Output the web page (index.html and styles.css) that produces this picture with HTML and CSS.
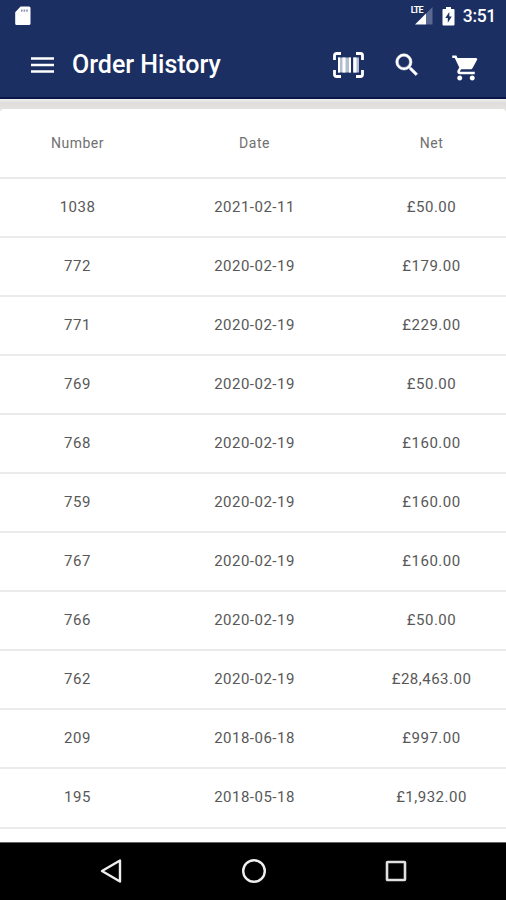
FILE: index.html
```
<!DOCTYPE html>
<html lang="en">
<head>
<meta charset="utf-8">
<title>Order History</title>
<link rel="stylesheet" href="styles.css">
</head>
<body>
<div class="screen">
  <header class="top">
    <div class="status">
      <svg class="sd" width="16" height="20" viewBox="0 0 16 20"><path fill="#fff" fill-rule="evenodd" d="M5.6 0.5H14a1.5 1.5 0 0 1 1.5 1.5v15.500a1.500 1.500 0 0 1-1.500 1.500H1.700a1.500 1.500 0 0 1-1.500-1.500V6.200Z"/><path fill="#8b96b5" d="M6 3.500h1.600v2.200H6Zm2.600 0h1.600v2.200H8.600Zm2.600 0h1.600v2.200h-1.600Z"/></svg>
      <div class="signal">
        <span class="lte">LTE</span>
        <svg width="19" height="18" viewBox="0 0 19 18"><path fill="#5a6991" d="M12 6.500 18.500 0v17.500H12Z"/><path fill="#fff" d="M1 17.500 12 6.500v11Z"/></svg>
      </div>
      <svg class="battery" width="13" height="19" viewBox="0 0 13 19"><path fill="#fff" d="M4 0h5v2h2.500q1 0 1 1v14.500q0 1-1 1h-10q-1 0-1-1V3q0-1 1-1H4Z"/><path fill="#1b2f63" d="M7.300 5 3.300 11h2.500v4.700l4-6.200H7.300Z"/></svg>
      <span class="clock">3:51</span>
    </div>
    <div class="bar">
      <svg class="menu" width="23" height="16" viewBox="0 0 23 16"><path stroke="#fff" stroke-width="2.500" d="M0 1.500h23M0 8h23M0 14.500h23"/></svg>
      <h1>Order History</h1>
      <svg class="scan" width="31" height="26" viewBox="0 0 31 26"><path fill="none" stroke="#fff" stroke-width="2.800" d="M1.500 8V3.500q0-2 2-2H8M23 1.500h4.500q2 0 2 2V8M29.500 18v4.500q0 2-2 2H23M8 24.500H3.500q-2 0-2-2V18"/><path fill="#b4bccf" d="M5 5.500h13v15H5Zm15 0h6v15h-6Z"/><path fill="#fff" d="M5 5.500h2v15H5Zm4.500 0h3v15h-3Zm6.500 0h2v15h-2Zm4.500 0h3v15h-3Z"/></svg>
      <svg class="search" width="30" height="30" viewBox="0 0 24 24"><path fill="#fff" stroke="#fff" stroke-width=".4" d="M15.500 14h-.79l-.28-.27A6.471 6.471 0 0 0 16 9.500 6.500 6.500 0 1 0 9.500 16c1.610 0 3.090-.59 4.230-1.570l.27.28v.79l5 4.990L20.490 19l-4.990-5zm-6 0C7.010 14 5 11.990 5 9.500S7.010 5 9.500 5 14 7.010 14 9.500 11.990 14 9.500 14z"/></svg>
      <svg class="cart" width="30" height="30" viewBox="0 0 24 24"><path fill="#fff" d="M7 18c-1.100 0-1.990.9-1.990 2S5.900 22 7 22s2-.9 2-2-.9-2-2-2zM1 2v2h2l3.600 7.590-1.350 2.450c-.16.280-.25.610-.25.960 0 1.100.9 2 2 2h12v-2H7.420c-.14 0-.25-.11-.25-.25l.03-.12.900-1.630h7.450c.75 0 1.410-.41 1.750-1.030l3.580-6.490A1.003 1.003 0 0 0 20 4H5.210l-.94-2H1zm16 16c-1.100 0-1.990.9-1.990 2s.89 2 1.990 2 2-.9 2-2-.9-2-2-2z"/></svg>
    </div>
  </header>
  <main>
    <div class="card">
      <div class="row head"><span>Number</span><span>Date</span><span>Net</span></div>
      <div class="row"><span>1038</span><span>2021-02-11</span><span>£50.00</span></div>
      <div class="row"><span>772</span><span>2020-02-19</span><span>£179.00</span></div>
      <div class="row"><span>771</span><span>2020-02-19</span><span>£229.00</span></div>
      <div class="row"><span>769</span><span>2020-02-19</span><span>£50.00</span></div>
      <div class="row"><span>768</span><span>2020-02-19</span><span>£160.00</span></div>
      <div class="row"><span>759</span><span>2020-02-19</span><span>£160.00</span></div>
      <div class="row"><span>767</span><span>2020-02-19</span><span>£160.00</span></div>
      <div class="row"><span>766</span><span>2020-02-19</span><span>£50.00</span></div>
      <div class="row"><span>762</span><span>2020-02-19</span><span>£28,463.00</span></div>
      <div class="row"><span>209</span><span>2018-06-18</span><span>£997.00</span></div>
      <div class="row"><span>195</span><span>2018-05-18</span><span>£1,932.00</span></div>
    </div>
  </main>
  <nav class="nav">
    <svg width="26" height="26" viewBox="0 0 26 26"><path fill="none" stroke="#eee" stroke-width="2.400" stroke-linejoin="round" d="M22 2.500v21L4 13Z"/></svg>
    <svg width="26" height="26" viewBox="0 0 26 26"><circle cx="13" cy="13" r="10.800" fill="none" stroke="#eee" stroke-width="2.400"/></svg>
    <svg width="26" height="26" viewBox="0 0 26 26"><rect x="4" y="4" width="18" height="18" rx=".5" fill="none" stroke="#e0e0e0" stroke-width="2.600"/></svg>
  </nav>
</div>
</body>
</html>
```
FILE: styles.css
```
* { box-sizing: border-box; }
body { margin: 0; font-family: Roboto, sans-serif; }
svg { display: block; flex: none; }
.screen { width: 506px; height: 900px; display: flex; flex-direction: column; overflow: hidden; }
.top { height: 99px; flex: none; background: #1b2f63; border-bottom: 2px solid #0c1646; color: #fff; }
.status { height: 32px; display: flex; align-items: center; padding: 0 10px 0 15px; }
.signal { position: relative; margin-left: auto; width: 22px; display: flex; justify-content: flex-end; }
.lte { position: absolute; left: 0; top: -1px; font-size: 9px; line-height: 9px; font-weight: 700; letter-spacing: -.8px; }
.battery { margin-left: 9px; }
.clock { margin-left: 8px; font-size: 17.500px; font-weight: 500; line-height: 32px; letter-spacing: -.3px; }
.bar { height: 66px; display: flex; align-items: center; padding: 0 25px 0 31px; }
h1 { margin: 0 auto 0 18px; font-size: 25px; font-weight: 500; line-height: 32px; white-space: nowrap; }
.search { margin-left: 28px; }
.cart { margin: 5px 0 0 29px; }
main { flex: 1; min-height: 0; padding-top: 10px; background: linear-gradient(#f0efee, #dedddc 4px, #e4e3e2 10px); overflow: hidden; }
.card { height: 100%; background: #fff; border-radius: 4px 4px 0 0; overflow: hidden; }
.row { height: 59.050px; margin: 0 -14px 0 -11px; display: grid; grid-template-columns: repeat(3, 1fr); align-items: center; text-align: center; border-bottom: 2px solid #ebebeb; font-size: 15px; letter-spacing: .5px; color: #585858; padding-bottom: 1px; }
.head { height: 70px; font-size: 14px; letter-spacing: .5px; color: #707070; padding-bottom: 0; }
.nav { height: 58px; flex: none; background: #000; border-top: 1px solid #666; display: flex; justify-content: space-between; align-items: center; padding: 0 97px 2px 98px; }
```
